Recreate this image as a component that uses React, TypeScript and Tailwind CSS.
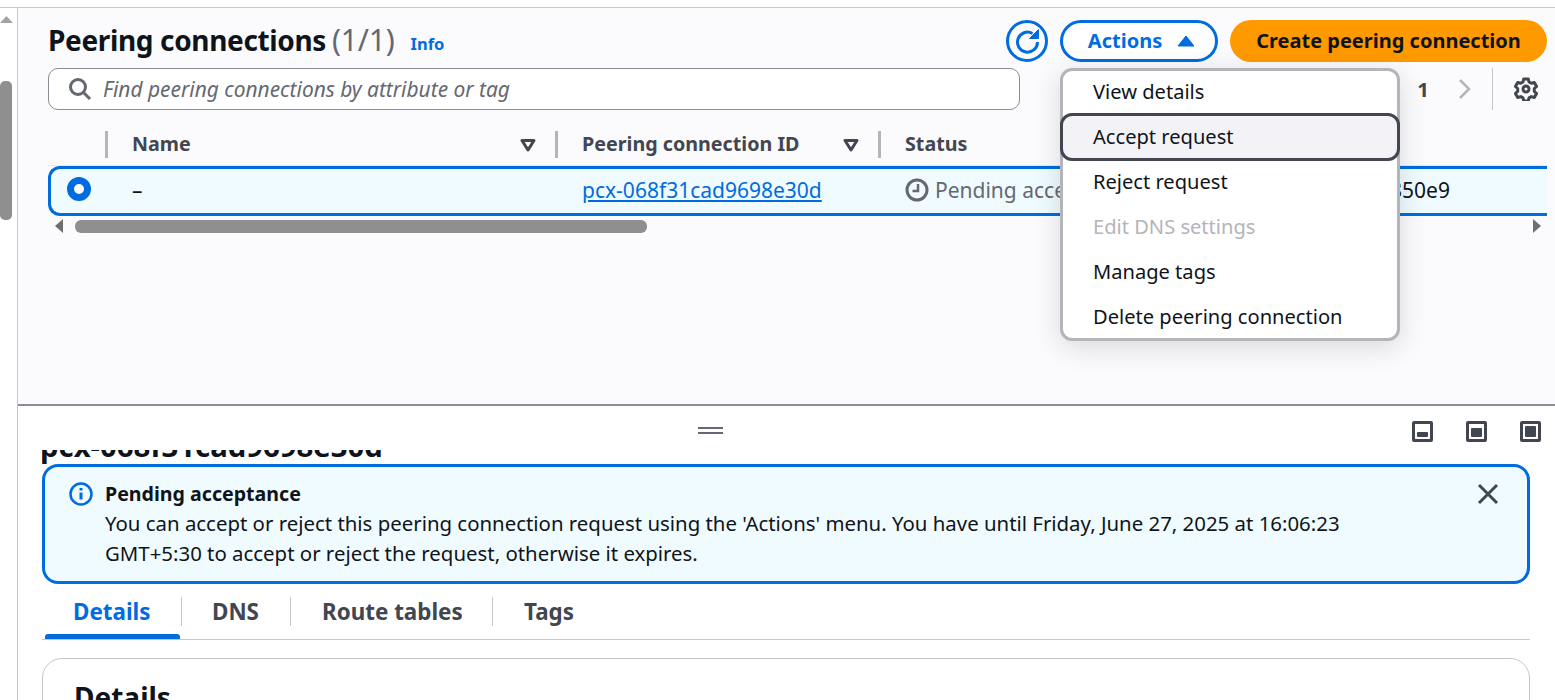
import React from "react";

function Sort() {
  return (
    <svg width="16" height="14" viewBox="0 0 16 14" className="shrink-0">
      <path d="M2 2.500h12L8 12z" fill="none" stroke="#424650" strokeWidth="3" strokeLinejoin="round" />
    </svg>
  );
}

function Divider() {
  return <div className="w-[3px] h-[27px] bg-[#b4b4bb] shrink-0" />;
}

function PaneIcon({ h }: { h: number }) {
  return (
    <div className="w-[21px] h-[21px] border-[3px] border-[#424650] rounded-[2px] flex flex-col justify-end p-[2px] box-border">
      <div className="w-full bg-[#424650] rounded-[1px]" style={{ height: h }} />
    </div>
  );
}

const items = [
  { t: "View details" },
  { t: "Accept request", active: true },
  { t: "Reject request" },
  { t: "Edit DNS settings", disabled: true },
  { t: "Manage tags" },
  { t: "Delete peering connection" },
];

export default function App() {
  return (
    <div className="w-[1555px] h-[700px] overflow-hidden flex flex-col bg-white text-[20.4px] leading-[30px] text-[#0f141a] font-['Noto_Sans',sans-serif]">
      <div className="h-[8px] shrink-0 bg-white border-b border-[#c6c6cd]" />
      <div className="flex flex-1 min-h-0">
        {/* page scrollbar */}
        <div className="w-[18px] shrink-0 border-r border-[#c6c6cd] bg-white flex flex-col">
          <svg width="14" height="8" viewBox="0 0 14 8" className="ml-0 mt-[8px] shrink-0">
            <path d="M0 7L6.500 0 13 7z" fill="#a3a3a3" />
          </svg>
          <div className="w-[12px] h-[139px] rounded-[5px] bg-[#8f8f8f] mt-[57px]" />
        </div>

        <div className="flex-1 min-w-0 flex flex-col">
          {/* upper pane */}
          <div className="relative h-[398px] shrink-0 bg-[#fbfbfd] border-b-2 border-[#8c8c94] pl-[30px] pr-[8px] pt-[12px] box-border">
            <div className="flex items-center h-[42px]">
              <h1 className="-mt-[2px] text-[28px] leading-[42px] font-bold tracking-[-0.35px] whitespace-nowrap">Peering connections</h1>
              <span className="-mt-[2px] ml-[6px] text-[30px] leading-[42px] text-[#656871] tracking-[-0.2px]">(1/1)</span>
              <span className="ml-[16px] mt-[5px] text-[16.500px] font-bold text-[#006ce0]">Info</span>
              <div className="ml-auto flex items-center">
                <div className="w-[42px] h-[42px] rounded-full border-[3px] border-[#006ce0] flex items-center justify-center box-border">
                  <svg width="30" height="30" viewBox="0 0 30 30" fill="none" stroke="#006ce0" strokeWidth="3">
                    <path d="M25.500 16A10 10 0 1 1 20.500 7.500" />
                    <path d="M26.500 3.500v9h-9z" fill="#006ce0" strokeWidth="1" strokeLinejoin="miter" />
                  </svg>
                </div>
                <div className="ml-[12px] w-[158px] h-[42px] rounded-full border-[3px] border-[#006ce0] bg-white flex items-center justify-center gap-[15px] pl-[5px] text-[20px] text-[#006ce0] font-bold box-border">
                  <span>Actions</span>
                  <svg width="18" height="12" viewBox="0 0 18 12"><path d="M9 1l8 10H1z" fill="#006ce0" stroke="#006ce0" strokeLinejoin="round" /></svg>
                </div>
                <div className="ml-[12px] w-[317px] h-[42px] rounded-full bg-[#ff9900] flex items-center justify-center text-[20px] font-bold whitespace-nowrap">
                  Create peering connection
                </div>
              </div>
            </div>

            <div className="flex items-center mt-[6px] h-[42px]">
              <div className="w-[972px] h-[42px] rounded-[10px] border border-[#8c8c94] bg-white flex items-center pl-[19px] box-border">
                <svg width="24" height="24" viewBox="0 0 24 24" fill="none" stroke="#656871" strokeWidth="3" className="shrink-0">
                  <circle cx="10" cy="10" r="7.500" />
                  <path d="M15.500 15.500L22 22" />
                </svg>
                <span className="ml-[11px] italic text-[20.900px] text-[#656871] whitespace-nowrap">Find peering connections by attribute or tag</span>
              </div>
              <div className="ml-auto flex items-center h-[42px]">
                <span className="font-bold text-[#424650] mr-[29px]">1</span>
                <svg width="14" height="22" viewBox="0 0 14 22" fill="none" stroke="#b4b4bb" strokeWidth="2.500" className="mr-[20px]">
                  <path d="M2 2l9 9-9 9" />
                </svg>
                <div className="w-px h-[42px] bg-[#c6c6cd] mr-[21px]" />
                <svg width="24" height="24" viewBox="0 0 24 24" fill="none" stroke="#424650" strokeWidth="3" strokeLinejoin="round" className="mr-[9px]">
                  <path d="M9.700 2h4.600l.7 3 2.300 1.300 3-.9 2.300 4-2.300 2.100v2.900l2.300 2.100-2.300 4-3-.9-2.300 1.300-.7 3H9.700l-.7-3-2.300-1.300-3 .9-2.300-4 2.300-2.100v-2.900L1.400 9.400l2.300-4 3 .9L9 5z" />
                  <circle cx="12" cy="12" r="3" />
                </svg>
              </div>
            </div>

            {/* table header */}
            <div className="flex items-center h-[27px] mt-[21px] text-[19.700px] font-bold text-[#424650]">
              <div className="w-[57px] shrink-0" />
              <Divider />
              <div className="w-[447px] shrink-0 pl-[24px] pr-[19px] flex items-center justify-between"><span className="-mt-[1px]">Name</span><Sort /></div>
              <Divider />
              <div className="w-[320px] shrink-0 pl-[24px] pr-[19px] flex items-center justify-between whitespace-nowrap"><span className="-mt-[1px]">Peering connection ID</span><Sort /></div>
              <Divider />
              <div className="pl-[24px] -mt-[1px]">Status</div>
            </div>
            <div className="mt-[7px] h-px bg-[#e8e8ec]" />

            {/* selected row */}
            <div className="relative h-[50px] flex items-center bg-[#f0fbff] border-y-[3px] border-l-[3px] border-[#006ce0] rounded-l-[12px] box-border text-[21px]">
              <div className="w-[55px] shrink-0 pl-[16px] -mt-[4px]">
                <div className="w-[24px] h-[24px] rounded-full border-[7px] border-[#006ce0] bg-white box-border" />
              </div>
              <div className="w-[450px] shrink-0 pl-[26px] -mt-[2px]">–</div>
              <div className="w-[323px] shrink-0 pl-[26px] -mt-[2px] text-[#006ce0] underline whitespace-nowrap">pcx-068f31cad9698e30d</div>
              <div className="w-[490px] shrink-0 pl-[26px] flex items-center gap-[6px] text-[#656871] whitespace-nowrap">
                <svg width="24" height="24" viewBox="0 0 24 24" fill="none" stroke="#656871" strokeWidth="3" className="shrink-0 -mt-[2px]">
                  <circle cx="12" cy="12" r="10" />
                  <path d="M13 6v7H7.500" strokeWidth="2.500" />
                </svg>
                <span className="-mt-[2px]">Pending acceptance</span>
              </div>
              <div className="w-[70px] shrink-0 ml-[21px] -mt-[2px]">850e9</div>
            </div>

            {/* horizontal scrollbar */}
            <div className="flex items-center h-[14px] mt-[3px]">
              <svg width="10" height="14" viewBox="0 0 10 14" className="ml-[7px] shrink-0"><path d="M8 0v14L0 7z" fill="#6f6f6f" /></svg>
              <div className="ml-[10px] w-[572px] h-[13px] rounded-[6px] bg-[#8f8f8f]" />
              <svg width="10" height="14" viewBox="0 0 10 14" className="ml-auto mr-[5px] shrink-0"><path d="M1 0v14l8-7z" fill="#6f6f6f" /></svg>
            </div>

            {/* actions menu */}
            <div className="absolute left-[1042px] top-[60px] w-[340px] h-[273px] bg-white rounded-[12px] border-[3px] border-[#b4b4bb] shadow-[0_6px_28px_rgba(0,7,22,0.14)] box-border text-[20.100px]">
              <div className="flex flex-col -mt-[2px]">
                {items.map((it) => (
                  <div
                    key={it.t}
                    className={
                      it.active
                        ? "relative -mx-[3px] h-[48px] -my-[1.500px] z-10 flex items-center pl-[30px] rounded-[12px] border-[3px] border-[#424650] bg-[#f3f3f7] box-border whitespace-nowrap"
                        : it.disabled
                        ? "h-[45px] flex items-center pl-[30px] text-[#b4b4bb] whitespace-nowrap"
                        : "h-[45px] flex items-center pl-[30px] whitespace-nowrap"
                    }
                  >
                    {it.t}
                  </div>
                ))}
              </div>
            </div>
          </div>

          {/* lower pane */}
          <div className="flex-1 min-h-0 overflow-hidden bg-white pl-[24px] pr-[25px]">
            <div className="relative h-[44px] shrink-0">
              <div className="absolute left-[656px] top-[21px] w-[25px] h-[7px] border-y-2 border-[#656871]" />
              <div className="flex justify-end items-center gap-[33px] pt-[15px] -mr-[11px]">
                <PaneIcon h={5} />
                <PaneIcon h={9} />
                <PaneIcon h={11} />
              </div>
            </div>
            <div className="h-[14px] overflow-hidden">
              <div className="-mt-[25px] -ml-[2px] text-[29.300px] leading-[42px] font-bold whitespace-nowrap">pcx-068f31cad9698e30d</div>
            </div>
            <div className="h-[120px] rounded-[16px] border-[3px] border-[#006ce0] bg-[#f0fbff] flex box-border pt-[12px] pl-[24px] pr-[27px]">
              <svg width="24" height="24" viewBox="0 0 24 24" fill="none" stroke="#006ce0" strokeWidth="2.500" className="shrink-0 mt-[3px]">
                <circle cx="12" cy="12" r="10.500" />
                <path d="M12 10.500v7" strokeWidth="3" />
                <path d="M12 6v2.500" strokeWidth="3" />
              </svg>
              <div className="ml-[12px] flex-1 whitespace-nowrap">
                <div className="font-bold text-[19.600px]">Pending acceptance</div>
                <div className="-mt-[1px]">You can accept or reject this peering connection request using the 'Actions' menu. You have until Friday, June 27, 2025 at 16:06:23</div>
                <div>GMT+5:30 to accept or reject the request, otherwise it expires.</div>
              </div>
              <svg width="24" height="24" viewBox="0 0 24 24" fill="none" stroke="#424650" strokeWidth="3" className="shrink-0 mt-[3px]">
                <path d="M3 3l18 18M21 3L3 21" />
              </svg>
            </div>
            <div className="relative mt-[13px] h-[43px] border-b border-[#c6c6cd] flex items-start font-bold text-[#424650] text-[22.400px] box-border">
              <div className="relative w-[139px] h-[40px] pl-[31px] text-[#006ce0]">
                Details
                <div className="absolute left-[3px] top-[37px] w-[135px] h-[5px] bg-[#006ce0] rounded-t-[3px]" />
              </div>
              <div className="w-px h-[29px] bg-[#c6c6cd] shrink-0" />
              <div className="w-[108px] pl-[30px]">DNS</div>
              <div className="w-px h-[29px] bg-[#c6c6cd] shrink-0" />
              <div className="w-[201px] pl-[31px] whitespace-nowrap">Route tables</div>
              <div className="w-px h-[29px] bg-[#c6c6cd] shrink-0" />
              <div className="pl-[31px]">Tags</div>
            </div>
            <div className="mt-[18px] h-[120px] rounded-t-[20px] border border-[#c6c6cd] pl-[31px] pt-[17px] box-border">
              <div className="text-[28px] leading-[42px] font-bold">Details</div>
            </div>
          </div>
        </div>
      </div>
    </div>
  );
}
